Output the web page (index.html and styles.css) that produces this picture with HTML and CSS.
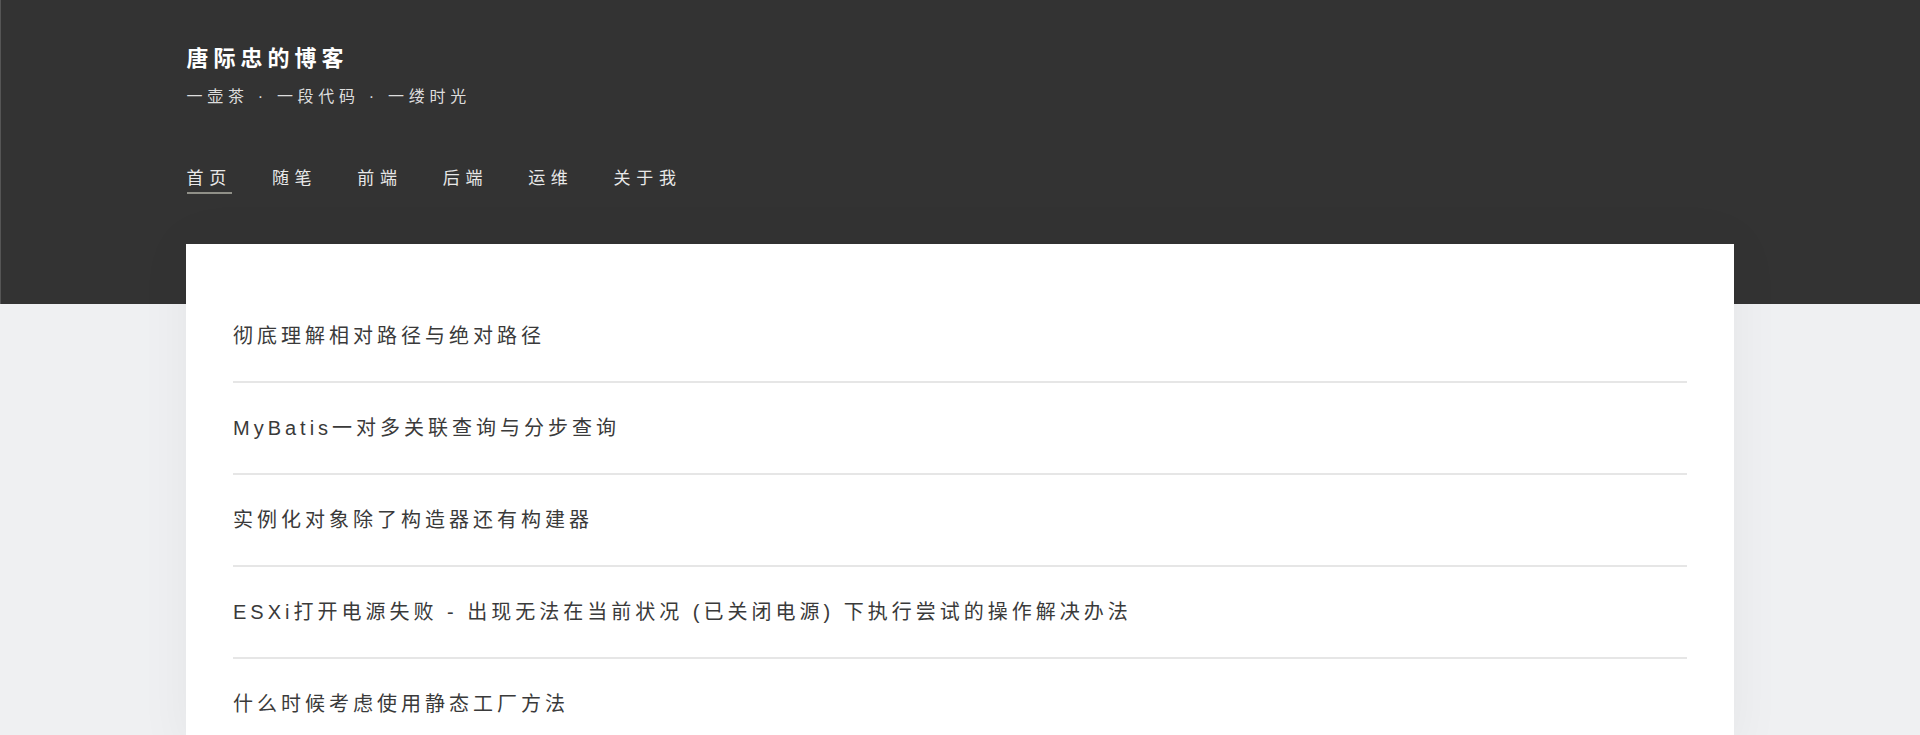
FILE: index.html
```html
<!DOCTYPE html>
<html lang="zh-CN">
<head>
  <meta charset="UTF-8">
  <meta name="viewport" content="width=device-width, initial-scale=1.0">
  <title>唐际忠的博客</title>
  <link rel="stylesheet" href="styles.css">
</head>
<body>
  <!-- Header -->
  <div class="site-header">
    <div class="wrap">
      <div class="site-title">唐际忠的博客</div>
      <div class="site-desc">一壶茶 · 一段代码 · 一缕时光</div>
      <div class="nav">
        <a class="nav-link active" href="#">首页</a>
        <a class="nav-link" href="#">随笔</a>
        <a class="nav-link" href="#">前端</a>
        <a class="nav-link" href="#">后端</a>
        <a class="nav-link" href="#">运维</a>
        <a class="nav-link" href="#">关于我</a>
      </div>
    </div>
  </div>

  <!-- Post list -->
  <div class="wrap">
    <div class="post-list">
      <a class="post-item" href="#">彻底理解相对路径与绝对路径</a>
      <a class="post-item" href="#">MyBatis一对多关联查询与分步查询</a>
      <a class="post-item" href="#">实例化对象除了构造器还有构建器</a>
      <a class="post-item" href="#">ESXi打开电源失败 - 出现无法在当前状况 (已关闭电源) 下执行尝试的操作解决办法</a>
      <a class="post-item" href="#">什么时候考虑使用静态工厂方法</a>
    </div>
  </div>
</body>
</html>
```

FILE: styles.css
```css
body {
  margin: 0;
  font-family: "Liberation Sans", "Noto Sans CJK SC", sans-serif;
  background-color: #eff0f2;
}
a {
  text-decoration: none;
}
.wrap {
  width: 1548px;
  margin: 0 auto;
}
.site-header {
  height: 304px;
  box-sizing: border-box;
  padding-top: 44px;
  background-color: #333;
  border-left: 1px solid #555;
}
.site-title {
  font-size: 22px;
  line-height: 30px;
  font-weight: bold;
  letter-spacing: 5px;
  color: #fff;
}
.site-desc {
  margin-top: 11px;
  font-size: 16px;
  line-height: 24px;
  letter-spacing: 4.7px;
  color: #ddd;
}
.nav {
  display: flex;
  gap: 40px;
  margin-top: 58px;
}
.nav-link {
  font-size: 17px;
  line-height: 24px;
  letter-spacing: 5.7px;
  color: #e8e8e8;
  padding-bottom: 1px;
  border-bottom: 2px solid transparent;
}
.nav-link.active {
  border-bottom-color: #909088;
}
.post-list {
  position: relative;
  margin-top: -60px;
  padding: 47px 47px 0;
  background: #fff;
  box-shadow: 0 0 50px rgba(0, 0, 0, 0.05);
}
.post-item {
  display: block;
  padding: 35px 0 35px;
  font-size: 20px;
  line-height: 20px;
  letter-spacing: 4px;
  color: #3a3a3a;
  border-bottom: 2px solid #e6e6e6;
}
```
